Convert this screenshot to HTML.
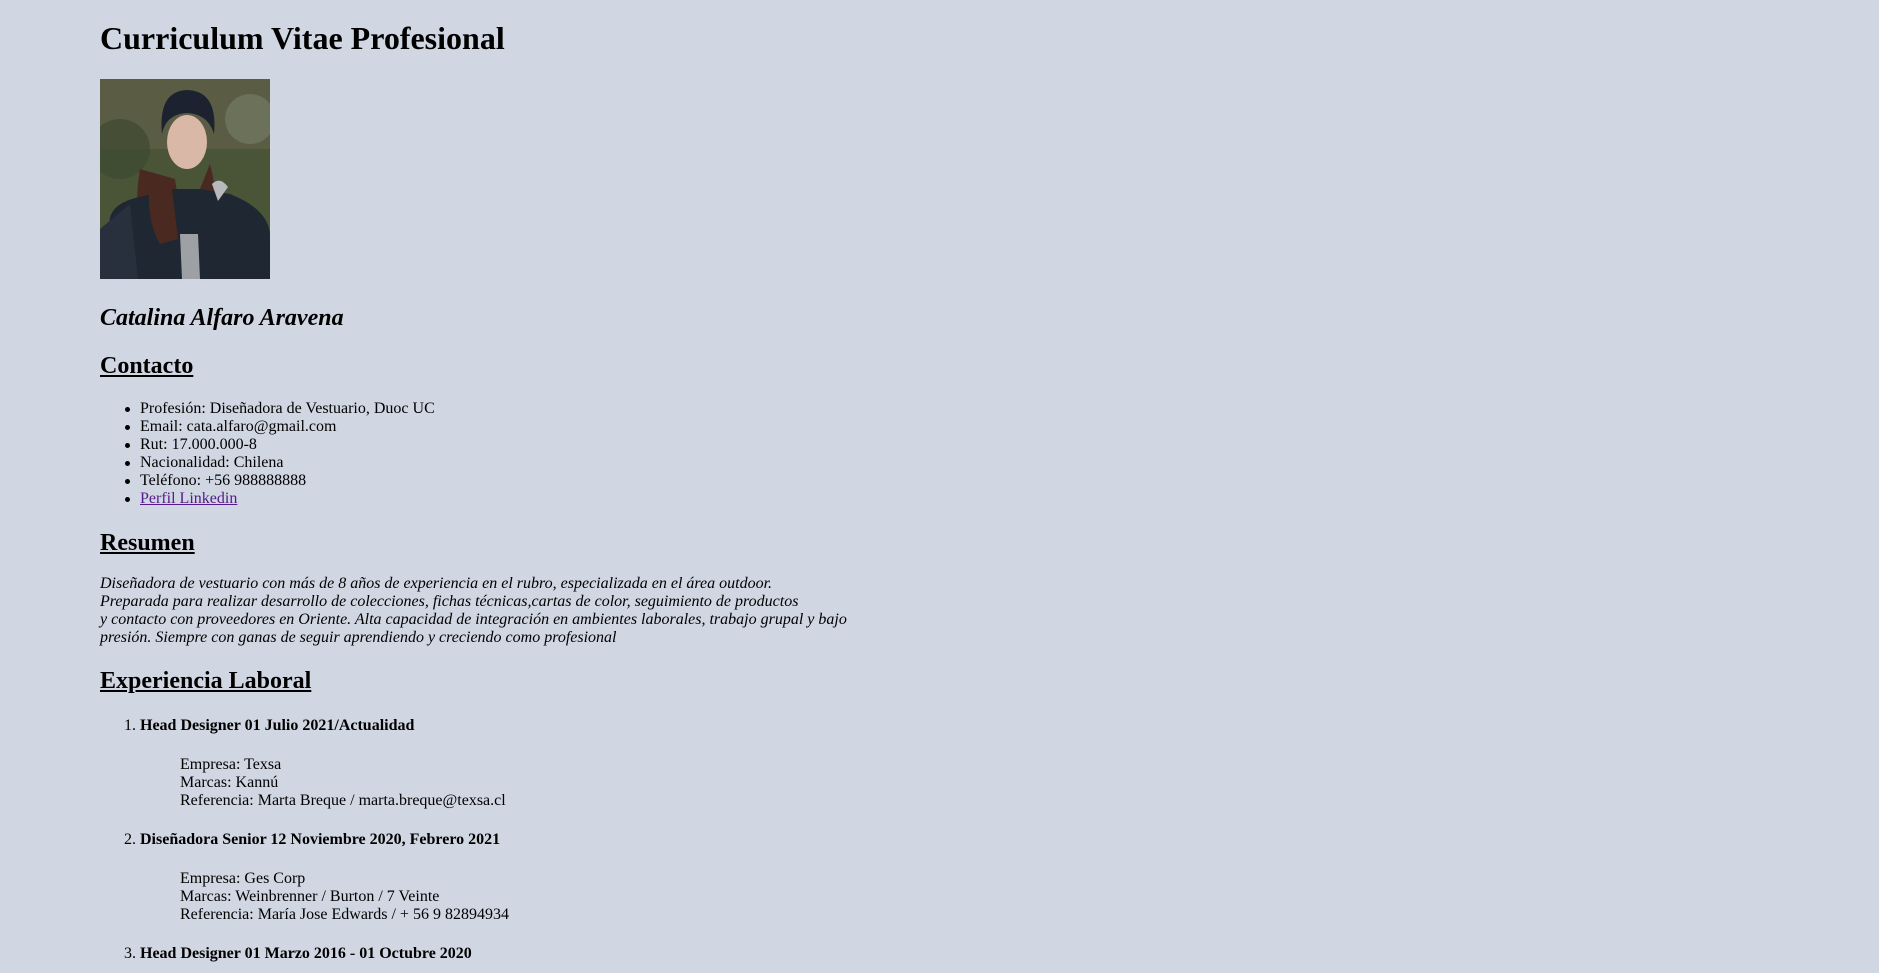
<!DOCTYPE html>
<html><head><meta charset="utf-8"><style>
html,body{margin:0;padding:0;background:#d0d6e2;width:1879px;height:973px;overflow:hidden;}
body{font-family:"Liberation Serif",serif;color:#000;position:relative;}
.a{position:absolute;white-space:nowrap;}
.t{font-size:16px;line-height:18px;}
.h1{left:100px;top:20px;font-size:32px;line-height:37px;font-weight:bold;}
.h2{left:100px;font-size:24px;line-height:28px;font-weight:bold;}
.u{text-decoration:underline;}
.dot{position:absolute;left:-15px;top:7px;width:5px;height:5px;border-radius:50%;background:#000;}
a{color:#551a8b;text-decoration:underline;}
.p{left:100px;font-size:16px;line-height:18px;font-style:italic;}
</style></head><body>
<div class="a h1">Curriculum Vitae Profesional</div>
<svg class="a" style="left:100px;top:79px" width="170" height="200" viewBox="0 0 170 200">
<rect width="170" height="200" fill="#4a5538"/>
<rect x="0" y="0" width="170" height="70" fill="#5a5c44"/>
<circle cx="150" cy="40" r="25" fill="#7d8570" opacity=".5"/>
<circle cx="20" cy="70" r="30" fill="#3d4a30" opacity=".7"/>
<path d="M40 90 Q30 150 55 175 L85 165 L75 100Z" fill="#4a2a20"/>
<path d="M110 85 Q122 130 110 160 L95 150 L100 110Z" fill="#4a2a20"/>
<path d="M25 200 L10 150 Q5 125 40 118 L70 110 L100 110 L130 115 Q168 130 170 155 L170 200Z" fill="#1f2733"/>
<path d="M0 150 L30 125 L38 200 L0 200Z" fill="#27303c"/>
<path d="M80 155 L98 155 L100 200 L82 200Z" fill="#9da1a6"/>
<path d="M50 95 Q45 140 60 165 L78 160 L72 110Z" fill="#4a2a20"/>
<ellipse cx="87" cy="63" rx="20" ry="27" fill="#d9b8a8"/>
<path d="M62 55 Q58 12 87 11 Q118 12 114 55 Q108 35 87 34 Q66 35 62 55Z" fill="#1c2230"/>
<path d="M112 105 Q120 97 128 108 L118 122Z" fill="#b7b9bd"/>
</svg>
<div class="a h2" style="top:304px;font-style:italic">Catalina Alfaro Aravena</div>
<div class="a h2 u" style="top:352px">Contacto</div>
<div class="a t" style="left:140px;top:400px"><span class="dot"></span>Profesión: Diseñadora de Vestuario, Duoc UC</div>
<div class="a t" style="left:140px;top:418px"><span class="dot"></span>Email: cata.alfaro@gmail.com</div>
<div class="a t" style="left:140px;top:436px"><span class="dot"></span>Rut: 17.000.000-8</div>
<div class="a t" style="left:140px;top:454px"><span class="dot"></span>Nacionalidad: Chilena</div>
<div class="a t" style="left:140px;top:472px"><span class="dot"></span>Teléfono: +56 988888888</div>
<div class="a t" style="left:140px;top:490px"><span class="dot"></span><a>Perfil Linkedin</a></div>
<div class="a h2 u" style="top:529px">Resumen</div>
<div class="a p" style="top:575px">Diseñadora de vestuario con más de 8 años de experiencia en el rubro, especializada en el área outdoor.<br>Preparada para realizar desarrollo de colecciones, fichas técnicas,cartas de color, seguimiento de productos<br>y contacto con proveedores en Oriente. Alta capacidad de integración en ambientes laborales, trabajo grupal y bajo<br>presión. Siempre con ganas de seguir aprendiendo y creciendo como profesional</div>
<div class="a h2 u" style="top:667px">Experiencia Laboral</div>
<div class="a t" style="left:124px;top:717px">1. <b>Head Designer 01 Julio 2021/Actualidad</b></div>
<div class="a t" style="left:180px;top:756px">Empresa: Texsa<br>Marcas: Kannú<br>Referencia: Marta Breque / marta.breque@texsa.cl</div>
<div class="a t" style="left:124px;top:831px">2. <b>Diseñadora Senior 12 Noviembre 2020, Febrero 2021</b></div>
<div class="a t" style="left:180px;top:870px">Empresa: Ges Corp<br>Marcas: Weinbrenner / Burton / 7 Veinte<br>Referencia: María Jose Edwards / + 56 9 82894934</div>
<div class="a t" style="left:124px;top:945px">3. <b>Head Designer 01 Marzo 2016 - 01 Octubre 2020</b></div>
</body></html>
